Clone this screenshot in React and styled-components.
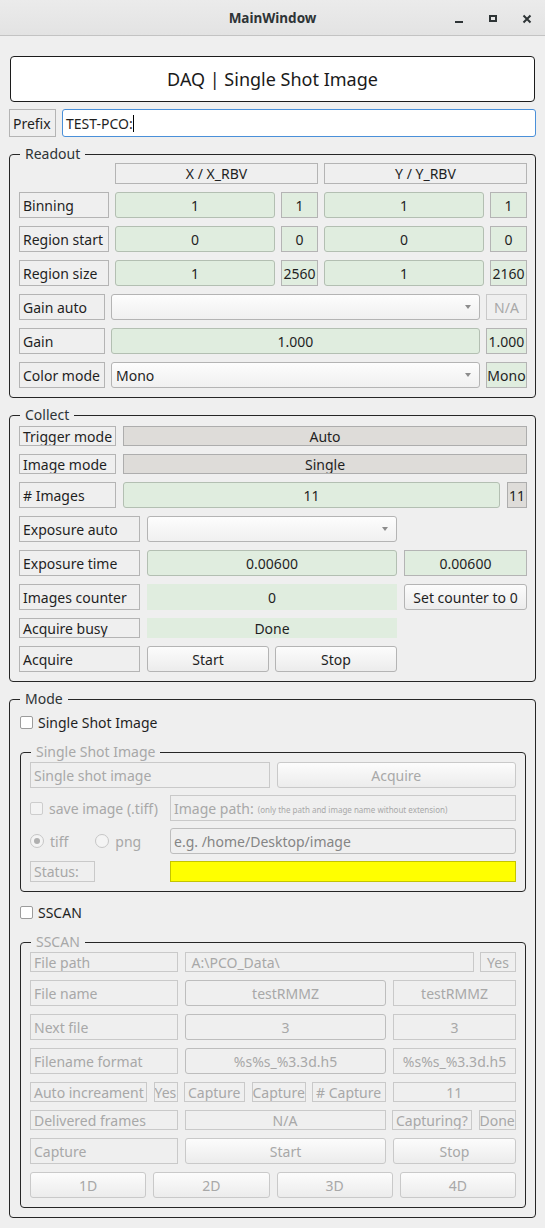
import React from 'react';
import styled, { createGlobalStyle, css } from 'styled-components';

const C = {
  bg: '#efefef',
  ink: '#1f1f1f',
  frame: '#b4b4b4',
  green: '#e0eddf',
  greenEdge: '#b3bfb2',
  gray: '#dedcd9',
  grayEdge: '#adadad',
  dim: '#a8a8a8',
  dimEdge: '#c9c9c9',
  group: '#262626',
};

const GlobalStyle = createGlobalStyle`
  html, body {
    margin: 0;
    background: ${C.bg};
  }
  body {
    font-family: "Noto Sans", "DejaVu Sans", sans-serif;
    font-size: 14px;
    color: ${C.ink};
  }
  * {
    box-sizing: border-box;
  }
`;

const Window = styled.div`
  width: 545px;
  height: 1228px;
  overflow: hidden;
  background: ${C.bg};
`;

const TitleBar = styled.header`
  height: 36px;
  display: grid;
  grid-template-columns: 1fr auto 1fr;
  align-items: center;
  background: linear-gradient(#ebebeb, #e3e3e3);
  border-bottom: 1px solid #c3c3c3;
`;

const WindowTitle = styled.div`
  grid-column: 2;
  font-size: 13.5px;
  font-weight: 700;
  color: #2e3436;
`;

const Controls = styled.div`
  grid-column: 3;
  justify-self: end;
  display: flex;
  gap: 18px;
  padding-right: 10px;
`;

const Control = styled.svg`
  width: 16px;
  height: 16px;
  color: #2e3436;
`;

const Content = styled.main`
  padding: 20px 9px 0 9px;
`;

const Banner = styled.div`
  margin: 0 1px;
  height: 46px;
  border: 1px solid #1c1c1c;
  border-radius: 4px;
  background: #fff;
  display: flex;
  align-items: center;
  justify-content: center;
  font-size: 18px;
  color: #1a1a1a;
`;

const Group = styled.section`
  position: relative;
  margin-top: 17px;
  border: 1px solid ${C.group};
  border-radius: 4px;
  padding: ${(p) => p.$pad};
`;

const GroupTitle = styled.span`
  position: absolute;
  top: -10px;
  left: 10px;
  padding: 0 5px;
  line-height: 18px;
  background: ${C.bg};
  color: ${(p) => (p.$dim ? C.dim : '#2e3436')};
`;

const Stack = styled.div`
  display: flex;
  flex-direction: column;
  gap: ${(p) => p.$gap ?? 8}px;
`;

const Row = styled.div`
  display: grid;
  grid-template-columns: ${(p) => p.$cols};
  column-gap: ${(p) => p.$gap ?? 6}px;
  height: ${(p) => p.$h ?? 26}px;
  margin-top: ${(p) => p.$top ?? 0}px;
`;

const cell = css`
  display: flex;
  align-items: center;
  min-width: 0;
  overflow: hidden;
  white-space: nowrap;
`;

const FrameLabel = styled.div`
  ${cell};
  padding: 0 ${(p) => p.$pad ?? 3}px;
  border: 1px solid ${(p) => (p.$dim ? C.dimEdge : C.frame)};
  color: ${(p) => (p.$dim ? C.dim : C.ink)};
  justify-content: ${(p) => (p.$center ? 'center' : 'flex-start')};
  grid-column: ${(p) => p.$span || 'auto'};
  justify-self: ${(p) => (p.$w ? 'start' : 'stretch')};
  width: ${(p) => (p.$w ? `${p.$w}px` : 'auto')};
`;

const Note = styled.span`
  font-size: 8px;
  margin: 3px 0 0 4px;
`;

const ValueLabel = styled.div`
  ${cell};
  justify-content: center;
  background: ${(p) => (p.$tone === 'gray' ? C.gray : C.green)};
  border: 1px solid ${(p) => (p.$tone === 'gray' ? C.grayEdge : C.frame)};
`;

const GreenEdit = styled.div`
  ${cell};
  justify-content: center;
  background: ${C.green};
  border: 1px solid ${C.greenEdge};
  border-radius: 3px;
`;

const FlatValue = styled.div`
  ${cell};
  justify-content: center;
  background: ${C.green};
`;

const DimEdit = styled.div`
  ${cell};
  justify-content: ${(p) => (p.$left ? 'flex-start' : 'center')};
  padding: 0 3px;
  border: 1px solid #bdbdbd;
  border-radius: 3px;
  color: ${(p) => p.$ink || C.dim};
`;

const PrefixInput = styled.div`
  ${cell};
  padding: 0 3px;
  background: #fff;
  border: 1px solid #4a90d9;
  border-radius: 3px;
`;

const Caret = styled.span`
  width: 1px;
  height: 17px;
  background: #000;
`;

const Combo = styled.div`
  ${cell};
  padding: 0 8px 0 4px;
  border: 1px solid ${C.frame};
  border-radius: 3px;
  background: linear-gradient(#fdfdfd, #f0f0f0);
`;

const Arrow = styled.span`
  margin-left: auto;
  width: 0;
  height: 0;
  border-left: 3.5px solid transparent;
  border-right: 3.5px solid transparent;
  border-top: 4px solid #8c8c8c;
`;

const Button = styled.button`
  font: inherit;
  padding: 0;
  min-width: 0;
  white-space: nowrap;
  border: 1px solid ${(p) => (p.$dim ? C.dimEdge : C.frame)};
  border-radius: 3px;
  background: linear-gradient(#fcfcfc, #ececec);
  color: ${(p) => (p.$dim ? C.dim : C.ink)};
`;

const Pair = styled.div`
  display: grid;
  grid-template-columns: 1fr 1fr;
  column-gap: 6px;
`;

const CheckRow = styled.label`
  display: flex;
  align-items: center;
  gap: ${(p) => p.$gap ?? 5}px;
  height: 26px;
  margin-top: ${(p) => p.$top ?? 0}px;
  color: ${(p) => (p.$dim ? C.dim : C.ink)};
`;

const Check = styled.span`
  width: 13px;
  height: 13px;
  border: 1px solid ${(p) => (p.$dim ? '#cdcdcd' : '#9c9c9c')};
  border-radius: 2px;
  background: ${(p) => (p.$dim ? '#f3f3f3' : '#fff')};
`;

const Radios = styled.div`
  display: flex;
  align-items: center;
  gap: 27px;
`;

const Radio = styled.span`
  position: relative;
  width: 14px;
  height: 14px;
  border: 1px solid #c6c6c6;
  border-radius: 50%;
  background: #f4f4f4;

  &::after {
    content: '';
    display: ${(p) => (p.$on ? 'block' : 'none')};
    position: absolute;
    inset: 3px;
    border-radius: 50%;
    background: #b0b0b0;
  }
`;

const Status = styled.div`
  background: #ffff00;
  border: 1px solid #c4c400;
`;

const Dims = styled.div`
  display: grid;
  grid-template-columns: repeat(4, 1fr);
  column-gap: 7px;
  height: 26px;
`;

const readoutCols = '90px 1fr 37px 1fr 37px';
const collectTop = '97px 1fr';
const collectBottom = '121px 250px 1fr';

const readoutRows = [
  ['Binning', '1', '1', '1', '1'],
  ['Region start', '0', '0', '0', '0'],
  ['Region size', '1', '2560', '1', '2160'],
];

const sscanEdits = [
  ['File name', 'testRMMZ'],
  ['Next file', '3'],
  ['Filename format', '%s%s_%3.3d.h5'],
];

const App = () => (
  <Window>
    <GlobalStyle />
    <TitleBar>
      <WindowTitle>MainWindow</WindowTitle>
      <Controls>
        <Control viewBox="0 0 16 16">
          <rect x="4" y="11" width="8" height="2" fill="currentColor" />
        </Control>
        <Control viewBox="0 0 16 16">
          <rect x="5" y="6" width="6" height="5" fill="none" stroke="currentColor" strokeWidth="2" />
        </Control>
        <Control viewBox="0 0 16 16">
          <path d="M4.5 5.5l7 7M11.5 5.5l-7 7" stroke="currentColor" strokeWidth="2" />
        </Control>
      </Controls>
    </TitleBar>

    <Content>
      <Banner>DAQ | Single Shot Image</Banner>

      <Row $cols="47px 1fr" $h={28} $top={7}>
        <FrameLabel>Prefix</FrameLabel>
        <PrefixInput>
          TEST-PCO:
          <Caret />
        </PrefixInput>
      </Row>

      <Group $pad="8px 8px 9px 9px">
        <GroupTitle>Readout</GroupTitle>
        <Stack>
          <Row $cols={readoutCols} $h={21}>
            <FrameLabel $center $span="2 / 4">X / X_RBV</FrameLabel>
            <FrameLabel $center $span="4 / 6">Y / Y_RBV</FrameLabel>
          </Row>
          {readoutRows.map(([name, x, xr, y, yr]) => (
            <Row key={name} $cols={readoutCols}>
              <FrameLabel>{name}</FrameLabel>
              <GreenEdit>{x}</GreenEdit>
              <ValueLabel>{xr}</ValueLabel>
              <GreenEdit>{y}</GreenEdit>
              <ValueLabel>{yr}</ValueLabel>
            </Row>
          ))}
          <Row $cols="86px 1fr 41px">
            <FrameLabel>Gain auto</FrameLabel>
            <Combo>
              <Arrow />
            </Combo>
            <FrameLabel $dim $center>N/A</FrameLabel>
          </Row>
          <Row $cols="86px 1fr 41px">
            <FrameLabel>Gain</FrameLabel>
            <GreenEdit>1.000</GreenEdit>
            <ValueLabel>1.000</ValueLabel>
          </Row>
          <Row $cols="86px 1fr 41px">
            <FrameLabel>Color mode</FrameLabel>
            <Combo>
              Mono
              <Arrow />
            </Combo>
            <ValueLabel>Mono</ValueLabel>
          </Row>
        </Stack>
      </Group>

      <Group $pad="10px 8px 9px 9px">
        <GroupTitle>Collect</GroupTitle>
        <Stack>
          <Row $cols={collectTop} $gap={7} $h={20}>
            <FrameLabel>Trigger mode</FrameLabel>
            <ValueLabel $tone="gray">Auto</ValueLabel>
          </Row>
          <Row $cols={collectTop} $gap={7} $h={20}>
            <FrameLabel>Image mode</FrameLabel>
            <ValueLabel $tone="gray">Single</ValueLabel>
          </Row>
          <Row $cols="97px 1fr 20px" $gap={7}>
            <FrameLabel># Images</FrameLabel>
            <GreenEdit>11</GreenEdit>
            <ValueLabel $tone="gray">11</ValueLabel>
          </Row>
          <Row $cols={collectBottom} $gap={7}>
            <FrameLabel>Exposure auto</FrameLabel>
            <Combo>
              <Arrow />
            </Combo>
          </Row>
          <Row $cols={collectBottom} $gap={7}>
            <FrameLabel>Exposure time</FrameLabel>
            <GreenEdit>0.00600</GreenEdit>
            <ValueLabel>0.00600</ValueLabel>
          </Row>
          <Row $cols={collectBottom} $gap={7}>
            <FrameLabel>Images counter</FrameLabel>
            <FlatValue>0</FlatValue>
            <Button>Set counter to 0</Button>
          </Row>
          <Row $cols={collectBottom} $gap={7} $h={20}>
            <FrameLabel>Acquire busy</FrameLabel>
            <FlatValue>Done</FlatValue>
          </Row>
          <Row $cols={collectBottom} $gap={7}>
            <FrameLabel>Acquire</FrameLabel>
            <Pair>
              <Button>Start</Button>
              <Button>Stop</Button>
            </Pair>
          </Row>
        </Stack>
      </Group>

      <Group $pad="9px 9px 9px 10px">
        <GroupTitle>Mode</GroupTitle>
        <CheckRow>
          <Check />
          Single Shot Image
        </CheckRow>

        <Group $pad="9px">
          <GroupTitle $dim>Single Shot Image</GroupTitle>
          <Stack $gap={7}>
            <Row $cols="1fr 1fr" $gap={7}>
              <FrameLabel $dim>Single shot image</FrameLabel>
              <Button $dim>Acquire</Button>
            </Row>
            <Row $cols="134px 1fr" $gap={6}>
              <CheckRow $dim $gap={6}>
                <Check $dim />
                save image (.tiff)
              </CheckRow>
              <FrameLabel $dim>
                Image path:
                <Note>(only the path and image name without extension)</Note>
              </FrameLabel>
            </Row>
            <Row $cols="134px 1fr" $gap={6}>
              <Radios>
                <CheckRow $dim $gap={6}>
                  <Radio $on />
                  tiff
                </CheckRow>
                <CheckRow $dim $gap={6}>
                  <Radio />
                  png
                </CheckRow>
              </Radios>
              <DimEdit $left $ink="#858585">e.g. /home/Desktop/image</DimEdit>
            </Row>
            <Row $cols="134px 1fr" $gap={6} $h={21}>
              <FrameLabel $dim $w={65}>Status:</FrameLabel>
              <Status />
            </Row>
          </Stack>
        </Group>

        <CheckRow $top={7}>
          <Check />
          SSCAN
        </CheckRow>

        <Group $pad="9px">
          <GroupTitle $dim>SSCAN</GroupTitle>
          <Stack>
            <Row $cols="148px 1fr 36px" $gap={6.5} $h={20}>
              <FrameLabel $dim>File path</FrameLabel>
              <FrameLabel $dim $pad={6}>A:\PCO_Data\</FrameLabel>
              <FrameLabel $dim $center>Yes</FrameLabel>
            </Row>
            {sscanEdits.map(([name, value]) => (
              <Row key={name} $cols="148px 201px 1fr" $gap={7}>
                <FrameLabel $dim>{name}</FrameLabel>
                <DimEdit>{value}</DimEdit>
                <FrameLabel $dim $center>{value}</FrameLabel>
              </Row>
            ))}
            <Row $cols="117px 24px 61px 54px 74px 1fr" $gap={6.5} $h={20}>
              <FrameLabel $dim>Auto increament</FrameLabel>
              <FrameLabel $dim $pad={0}>Yes</FrameLabel>
              <FrameLabel $dim>Capture</FrameLabel>
              <FrameLabel $dim $pad={0}>Capture</FrameLabel>
              <FrameLabel $dim>
                # Capture
              </FrameLabel>
              <FrameLabel $dim $center>11</FrameLabel>
            </Row>
            <Row $cols="148px 201px 80px 1fr" $gap={6.5} $h={20}>
              <FrameLabel $dim>Delivered frames</FrameLabel>
              <FrameLabel $dim $center>N/A</FrameLabel>
              <FrameLabel $dim>Capturing?</FrameLabel>
              <FrameLabel $dim $pad={0}>Done</FrameLabel>
            </Row>
            <Row $cols="148px 201px 1fr" $gap={7}>
              <FrameLabel $dim>Capture</FrameLabel>
              <Button $dim>Start</Button>
              <Button $dim>Stop</Button>
            </Row>
            <Dims>
              <Button $dim>1D</Button>
              <Button $dim>2D</Button>
              <Button $dim>3D</Button>
              <Button $dim>4D</Button>
            </Dims>
          </Stack>
        </Group>
      </Group>
    </Content>
  </Window>
);

export default App;
